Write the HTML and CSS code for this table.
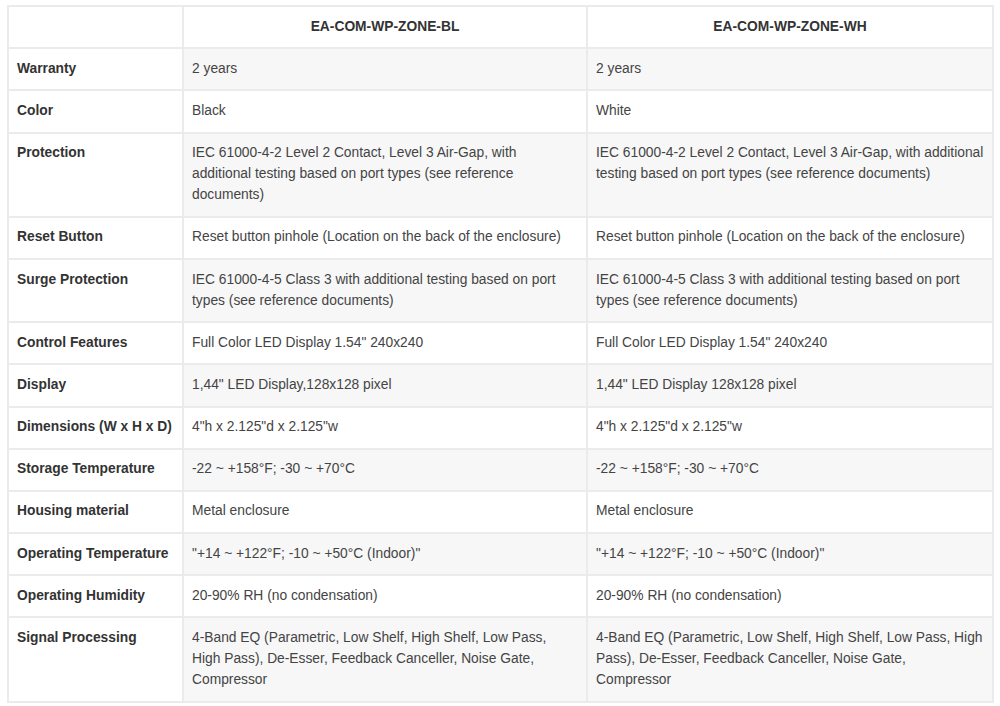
FILE: index.html
```html
<!DOCTYPE html>
<html lang="en">

<head>
    <meta charset="UTF-8">
    <meta name="viewport" content="width=device-width, initial-scale=1.0">
    <title>Specifications</title>
    <link rel="stylesheet" href="styles.css">
</head>

<body>
    <table class="specs">
        <colgroup>
            <col class="colLabel">
            <col class="colBl">
            <col>
        </colgroup>
        <thead>
            <tr>
                <th></th>
                <th class="modelo">EA-COM-WP-ZONE-BL</th>
                <th class="modelo">EA-COM-WP-ZONE-WH</th>
            </tr>
        </thead>
        <tbody>
            <tr>
                <th>Warranty</th>
                <td>2 years</td>
                <td>2 years</td>
            </tr>
            <tr>
                <th>Color</th>
                <td>Black</td>
                <td>White</td>
            </tr>
            <tr>
                <th>Protection</th>
                <td>IEC 61000-4-2 Level 2 Contact, Level 3 Air-Gap, with additional testing based on port types (see reference documents)</td>
                <td>IEC 61000-4-2 Level 2 Contact, Level 3 Air-Gap, with additional testing based on port types (see reference documents)</td>
            </tr>
            <tr>
                <th>Reset Button</th>
                <td>Reset button pinhole (Location on the back of the enclosure)</td>
                <td>Reset button pinhole (Location on the back of the enclosure)</td>
            </tr>
            <tr>
                <th>Surge Protection</th>
                <td>IEC 61000-4-5 Class 3 with additional testing based on port types (see reference documents)</td>
                <td>IEC 61000-4-5 Class 3 with additional testing based on port types (see reference documents)</td>
            </tr>
            <tr>
                <th>Control Features</th>
                <td>Full Color LED Display 1.54" 240x240</td>
                <td>Full Color LED Display 1.54" 240x240</td>
            </tr>
            <tr>
                <th>Display</th>
                <td>1,44" LED Display,128x128 pixel</td>
                <td>1,44" LED Display 128x128 pixel</td>
            </tr>
            <tr>
                <th>Dimensions (W x H x D)</th>
                <td>4"h x 2.125"d x 2.125"w</td>
                <td>4"h x 2.125"d x 2.125"w</td>
            </tr>
            <tr>
                <th>Storage Temperature</th>
                <td>-22 ~ +158°F; -30 ~ +70°C</td>
                <td>-22 ~ +158°F; -30 ~ +70°C</td>
            </tr>
            <tr>
                <th>Housing material</th>
                <td>Metal enclosure</td>
                <td>Metal enclosure</td>
            </tr>
            <tr>
                <th>Operating Temperature</th>
                <td>"+14 ~ +122°F; -10 ~ +50°C (Indoor)"</td>
                <td>"+14 ~ +122°F; -10 ~ +50°C (Indoor)"</td>
            </tr>
            <tr>
                <th>Operating Humidity</th>
                <td>20-90% RH (no condensation)</td>
                <td>20-90% RH (no condensation)</td>
            </tr>
            <tr>
                <th>Signal Processing</th>
                <td>4-Band EQ (Parametric, Low Shelf, High Shelf, Low Pass, High Pass), De-Esser, Feedback Canceller, Noise Gate, Compressor</td>
                <td>4-Band EQ (Parametric, Low Shelf, High Shelf, Low Pass, High Pass), De-Esser, Feedback Canceller, Noise Gate, Compressor</td>
            </tr>
        </tbody>
    </table>
</body>

</html>
```

FILE: styles.css
```css
body {
    margin: 5px 6px 0 7px;
    background: white;
    color: #444;
    font-family: 'Liberation Sans', Arial, sans-serif;
    font-size: 13.8px;
}

.specs {
    width: 100%;
    border-collapse: collapse;
    table-layout: fixed;
}

.colLabel {
    width: 175px;
}

.colBl {
    width: 404px;
}

.specs th,
.specs td {
    border: 2px solid #ebebeb;
    padding: 8.6px 8px 10.6px;
    line-height: 21px;
    text-align: left;
    vertical-align: top;
}

.specs th {
    color: #333;
    font-weight: bold;
    background: white;
}

.specs thead .modelo {
    text-align: center;
}

.specs tbody tr:nth-child(odd) td {
    background: #f7f7f7;
}
```
